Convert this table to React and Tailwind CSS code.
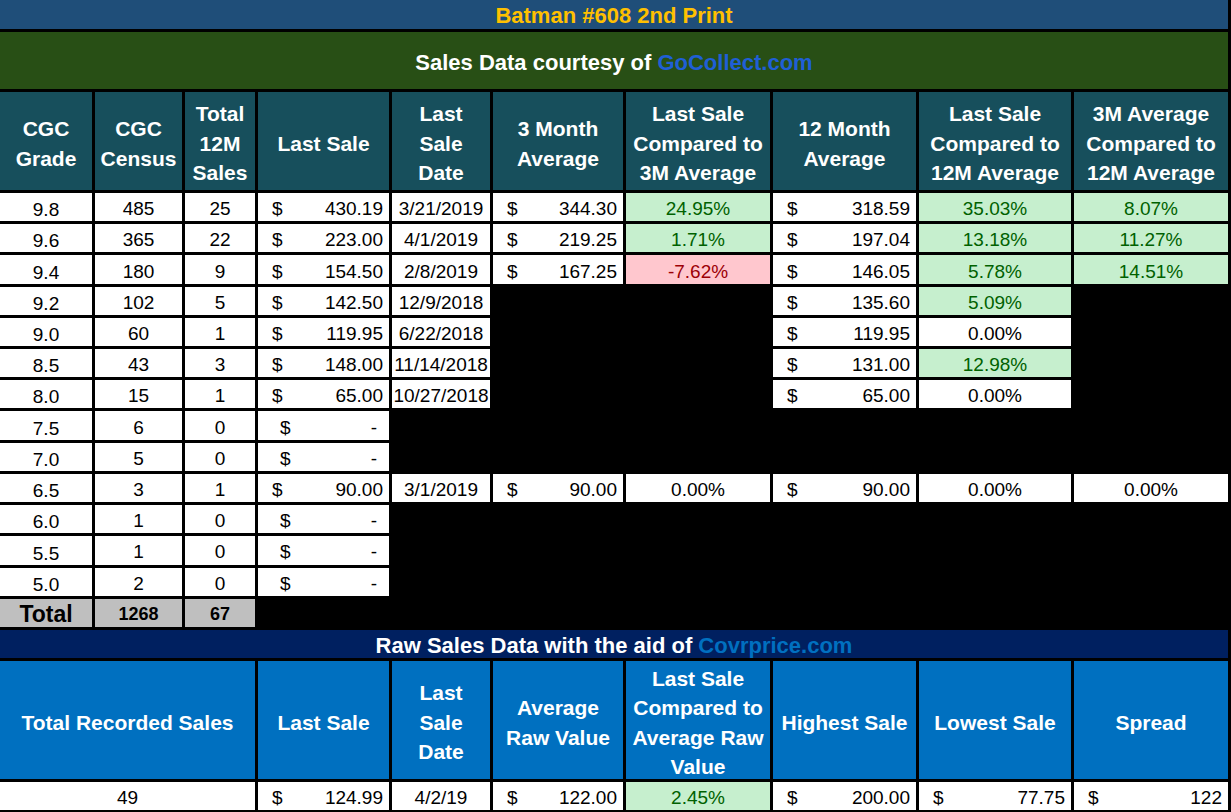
import React from 'react';

const font = { fontFamily: '"Liberation Sans", Arial, sans-serif' };

const g = (v) => ({ v, tone: 'good' });
const r = (v) => ({ v, tone: 'bad' });
const w = (v) => ({ v, tone: 'plain' });

// grade, census, 12m sales, last sale, date, 3m avg, vs 3m, 12m avg, vs 12m, 3m vs 12m
const rows = [
  ['9.8', '485', '25', '430.19', '3/21/2019', '344.30', g('24.95%'), '318.59', g('35.03%'), g('8.07%')],
  ['9.6', '365', '22', '223.00', '4/1/2019', '219.25', g('1.71%'), '197.04', g('13.18%'), g('11.27%')],
  ['9.4', '180', '9', '154.50', '2/8/2019', '167.25', r('-7.62%'), '146.05', g('5.78%'), g('14.51%')],
  ['9.2', '102', '5', '142.50', '12/9/2018', null, null, '135.60', g('5.09%'), null],
  ['9.0', '60', '1', '119.95', '6/22/2018', null, null, '119.95', w('0.00%'), null],
  ['8.5', '43', '3', '148.00', '11/14/2018', null, null, '131.00', g('12.98%'), null],
  ['8.0', '15', '1', '65.00', '10/27/2018', null, null, '65.00', w('0.00%'), null],
  ['7.5', '6', '0', '-', null, null, null, null, null, null],
  ['7.0', '5', '0', '-', null, null, null, null, null, null],
  ['6.5', '3', '1', '90.00', '3/1/2019', '90.00', w('0.00%'), '90.00', w('0.00%'), w('0.00%')],
  ['6.0', '1', '0', '-', null, null, null, null, null, null],
  ['5.5', '1', '0', '-', null, null, null, null, null, null],
  ['5.0', '2', '0', '-', null, null, null, null, null, null],
];

const cols = 'grid-cols-[92px_87px_70px_131px_98px_130px_144px_143px_152px_154px]';

function Head({ children, blue }) {
  return (
    <div
      className={`${blue ? 'bg-[#0070c0]' : 'bg-[#174f5c]'} flex items-center justify-center text-center text-white font-bold text-[21px] leading-[29.5px] pt-[5px] overflow-hidden`}
    >
      <div>{children}</div>
    </div>
  );
}

function Plain({ v, grade }) {
  if (v == null) return <div />;
  return (
    <div
      className={`bg-white flex justify-center text-[19px] leading-[19px] text-black ${grade ? 'items-end pb-[2px]' : 'items-center pt-[3px]'}`}
    >
      {v}
    </div>
  );
}

function Money({ v }) {
  if (v == null) return <div />;
  const dash = v === '-';
  return (
    <div
      className={`bg-white flex items-center justify-between text-[19px] leading-[19px] text-black pt-[3px] ${dash ? 'pl-[22px] pr-[12px]' : 'pl-[14px] pr-[6px]'}`}
    >
      <span>$</span>
      <span>{v}</span>
    </div>
  );
}

function Pct({ cell }) {
  if (cell == null) return <div />;
  const tone =
    cell.tone === 'good'
      ? 'bg-[#c6efce] text-[#006100]'
      : cell.tone === 'bad'
      ? 'bg-[#ffc7ce] text-[#9c0006]'
      : 'bg-white text-black';
  return (
    <div className={`${tone} flex items-center justify-center text-[19px] leading-[19px] pt-[3px]`}>
      {cell.v}
    </div>
  );
}

export default function App() {
  return (
    <div className="w-[1231px] h-[812px] bg-black overflow-hidden flex flex-col gap-[3px]" style={font}>
      {/* GoCollect section */}
      <div
        className={`grid ${cols} grid-rows-[29px_57px_98px_repeat(14,minmax(0,1fr))] gap-[3px] h-[627px] pr-[3px]`}
      >
        <div className="col-span-10 bg-[#1f4e79] flex items-center justify-center pt-[3px] text-[#ffc000] font-bold text-[22px] leading-[22px]">
          Batman #608 2nd Print
        </div>
        <div className="col-span-10 bg-[#284f15] flex items-center justify-center pt-[4px] text-white font-bold text-[22px]">
          <span>
            Sales Data courtesy of <span className="text-[#1f5fd6]">GoCollect.com</span>
          </span>
        </div>

        <Head>CGC<br />Grade</Head>
        <Head>CGC<br />Census</Head>
        <Head>Total<br />12M<br />Sales</Head>
        <Head>Last Sale</Head>
        <Head>Last<br />Sale<br />Date</Head>
        <Head>3 Month<br />Average</Head>
        <Head>Last Sale<br />Compared to<br />3M Average</Head>
        <Head>12 Month<br />Average</Head>
        <Head>Last Sale<br />Compared to<br />12M Average</Head>
        <Head>3M Average<br />Compared to<br />12M Average</Head>

        {rows.map((row, i) => (
          <React.Fragment key={i}>
            <Plain v={row[0]} grade />
            <Plain v={row[1]} />
            <Plain v={row[2]} />
            <Money v={row[3]} />
            <Plain v={row[4]} />
            <Money v={row[5]} />
            <Pct cell={row[6]} />
            <Money v={row[7]} />
            <Pct cell={row[8]} />
            <Pct cell={row[9]} />
          </React.Fragment>
        ))}

        <div className="bg-[#bfbfbf] flex items-end justify-center pb-[1px] font-bold text-[23px] leading-[24px]">Total</div>
        <div className="bg-[#bfbfbf] flex items-center justify-center pt-[4px] font-bold text-[18px]">1268</div>
        <div className="bg-[#bfbfbf] flex items-center justify-center pt-[4px] font-bold text-[18px]">67</div>
      </div>

      {/* Covrprice section */}
      <div className={`grid ${cols} grid-rows-[28px_118px_28px] gap-[3px] pr-[3px] pb-[2px]`}>
        <div className="col-span-10 bg-[#002060] flex items-center justify-center pt-[4px] text-white font-bold text-[22px] leading-[22px]">
          <span>
            Raw Sales Data with the aid of <span className="text-[#0070c0]">Covrprice.com</span>
          </span>
        </div>

        <div className="col-span-3 grid">
          <Head blue>Total Recorded Sales</Head>
        </div>
        <Head blue>Last Sale</Head>
        <Head blue>Last<br />Sale<br />Date</Head>
        <Head blue>Average<br />Raw Value</Head>
        <Head blue>Last Sale<br />Compared to<br />Average Raw<br />Value</Head>
        <Head blue>Highest Sale</Head>
        <Head blue>Lowest Sale</Head>
        <Head blue>Spread</Head>

        <div className="col-span-3 grid">
          <Plain v="49" />
        </div>
        <Money v="124.99" />
        <Plain v="4/2/19" />
        <Money v="122.00" />
        <Pct cell={g('2.45%')} />
        <Money v="200.00" />
        <Money v="77.75" />
        <Money v="122" />
      </div>
    </div>
  );
}
